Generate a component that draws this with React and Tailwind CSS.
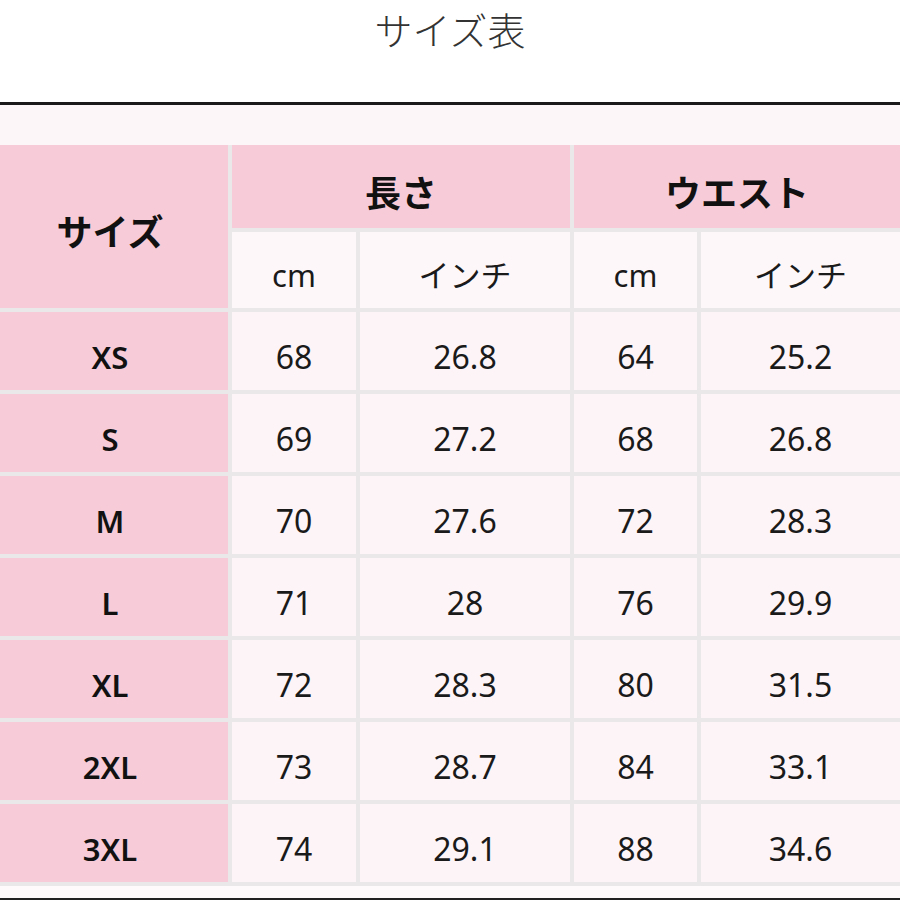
import React from "react";

const rows = [
  ["XS", "68", "26.8", "64", "25.2"],
  ["S", "69", "27.2", "68", "26.8"],
  ["M", "70", "27.6", "72", "28.3"],
  ["L", "71", "28", "76", "29.9"],
  ["XL", "72", "28.3", "80", "31.5"],
  ["2XL", "73", "28.7", "84", "33.1"],
  ["3XL", "74", "29.1", "88", "34.6"],
];

const font = { fontFamily: '"Noto Sans", "Noto Sans CJK JP", sans-serif' };

export default function App() {
  return (
    <div className="w-[900px] h-[900px] bg-white overflow-hidden flex flex-col" style={font}>
      <div className="h-[102px] flex justify-center pt-[5px]">
        <div
          className="text-[38px] font-light text-[#333] leading-[48px]"
          style={{ fontFamily: '"Noto Sans CJK JP", sans-serif' }}
        >
          サイズ表
        </div>
      </div>
      <div className="h-[3px] bg-[#1a1a1a]" />
      <div className="bg-[#fdf6f8] pt-[40px] flex-1 flex flex-col">
        <div
          className="grid bg-[#ebe8ea] gap-[4px] pb-[4px] grid-cols-[228px_124px_210px_123px_199px] grid-rows-[83px_76px_repeat(7,78px)]"
        >
          <div className="row-span-2 bg-[#f7cbd8] flex items-center justify-center pt-[12px] pr-[8px] text-[36px] font-bold text-[#111]">
            サイズ
          </div>
          <div className="col-span-2 bg-[#f7cbd8] flex items-center justify-center pt-[14px] text-[36px] font-bold text-[#111]">
            長さ
          </div>
          <div className="col-span-2 bg-[#f7cbd8] flex items-center justify-center pt-[14px] text-[36px] font-bold text-[#111]">
            ウエスト
          </div>
          {["cm", "インチ", "cm", "インチ"].map((t, i) => (
            <div
              key={i}
              className="bg-[#fdf7fa] flex items-center justify-center pt-[10px] text-[31px] text-[#1a1a1a]"
            >
              {t}
            </div>
          ))}
          {rows.map((r) => (
            <React.Fragment key={r[0]}>
              <div className="bg-[#f7cbd8] flex items-center justify-center pt-[12px] pr-[8px] text-[31px] font-semibold text-[#111]">
                {r[0]}
              </div>
              {r.slice(1).map((v, j) => (
                <div
                  key={j}
                  className="bg-[#fdf4f8] flex items-center justify-center pt-[12px] text-[32px] text-[#1a1a1a]"
                >
                  {v}
                </div>
              ))}
            </React.Fragment>
          ))}
        </div>
        <div className="flex-1 bg-[#fefafb]" />
      </div>
      <div className="h-[2px] bg-[#222]" />
    </div>
  );
}
